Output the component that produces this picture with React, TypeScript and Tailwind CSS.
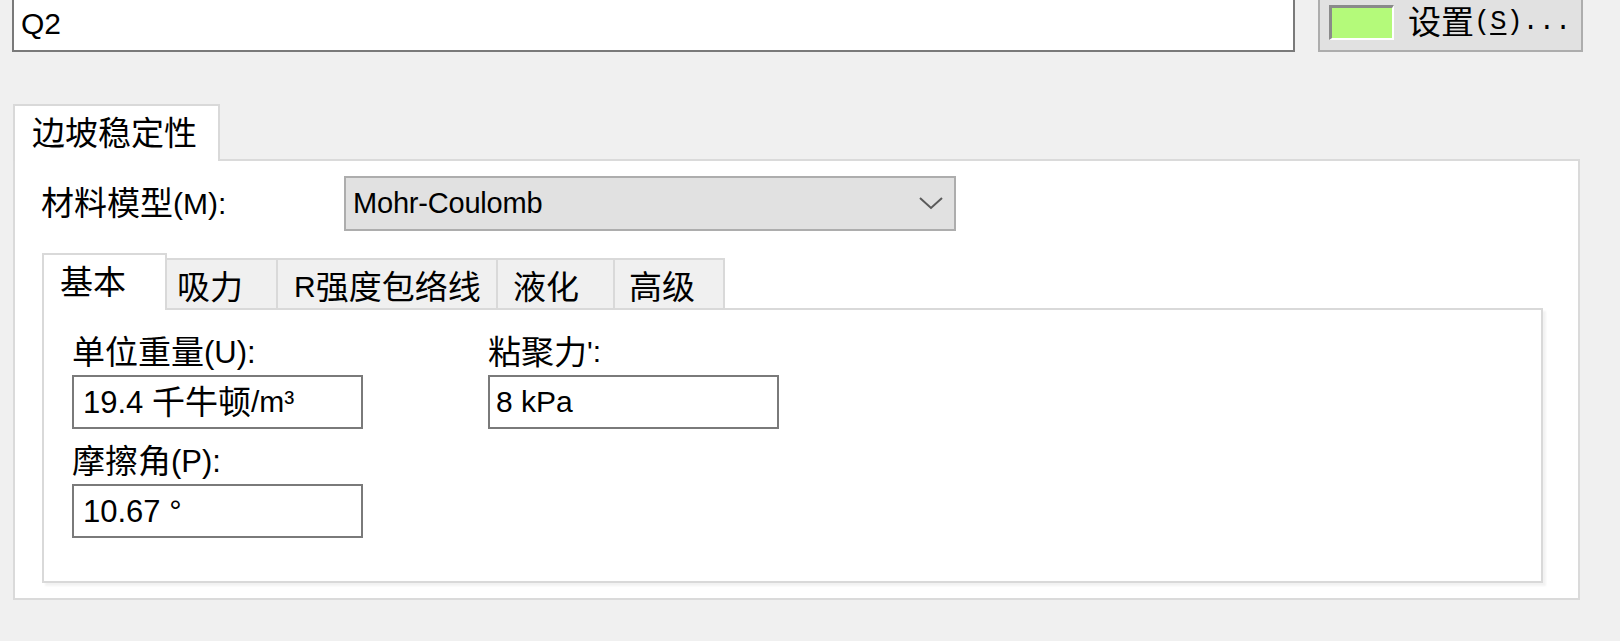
import React from 'react';

// Latin runs are set a bit smaller than the CJK ones, as in the original dialog
function L({ children }: { children: React.ReactNode }) {
  return <span className="text-[30px]">{children}</span>;
}

function Field({ label, value, pad }: { label: React.ReactNode; value: React.ReactNode; pad: string }) {
  return (
    <div className="flex flex-col">
      <div className="h-[36px] flex items-center">{label}</div>
      <div className={`mt-[5px] w-[291px] h-[54px] bg-white border-2 border-[#7a7a7a] flex items-center ${pad}`}>
        {value}
      </div>
    </div>
  );
}

export default function App() {
  return (
    <div className="w-[1620px] h-[641px] overflow-hidden bg-[#f0f0f0] text-black text-[33px] leading-none font-['Liberation_Sans','Noto_Sans_CJK_SC',sans-serif]">
      {/* Name + colour row */}
      <div className="flex items-end -mt-[10px] pl-[12px]">
        <div className="w-[1283px] h-[61px] bg-white border-2 border-[#7a7a7a] flex items-center pt-[5px] pl-[7px]">
          <L>Q2</L>
        </div>
        <button className="ml-[23px] w-[265px] h-[62px] bg-[#e1e1e1] border-2 border-[#adadad] flex items-center pt-[3px] pl-[9px]">
          <span className="w-[65px] h-[35px] bg-[#b4fa7a] border-t-[3px] border-l-[3px] border-t-[#8a8a8a] border-l-[#8a8a8a] border-b-2 border-r-2 border-b-white border-r-white" />
          <span className="ml-[14px] flex items-center">
            设置
            <span className="font-['Liberation_Mono',monospace] text-[27px]">
              (<span className="underline underline-offset-4">S</span>)...
            </span>
          </span>
        </button>
      </div>

      {/* Outer tab */}
      <div className="mt-[52px] ml-[13px] w-[207px] h-[57px] -mb-[2px] relative z-10 bg-white border-2 border-b-0 border-[#d9d9d9] flex items-center pl-[17px]">
        边坡稳定性
      </div>

      <div className="ml-[13px] w-[1567px] h-[441px] bg-white border-2 border-[#dadada]">
        {/* Material model */}
        <div className="mt-[15px] ml-[26px] flex items-center h-[55px]">
          <div className="w-[303px] flex items-center">
            材料模型<L>(M):</L>
          </div>
          <div className="w-[612px] h-[55px] bg-[#e1e1e1] border-2 border-[#adadad] flex items-center justify-between pl-[7px] pr-[11px]">
            <span className="text-[29px] tracking-[-0.2px]">Mohr-Coulomb</span>
            <svg width="24" height="13" viewBox="0 0 24 13">
              <polyline points="1,1 12,11 23,1" fill="none" stroke="#5a5a5a" strokeWidth="2" />
            </svg>
          </div>
        </div>

        {/* Inner tabs */}
        <div className="mt-[22px] ml-[27px] flex items-end">
          <div className="w-[125px] h-[57px] -mb-[2px] relative z-10 bg-white border-2 border-b-0 border-[#d9d9d9] flex items-center pl-[16px]">
            基本
          </div>
          <div className="w-[111px] h-[50px] bg-[#f0f0f0] border-t-2 border-r-2 border-[#d9d9d9] flex items-center pt-[6px] pl-[10px]">
            吸力
          </div>
          <div className="w-[220px] h-[50px] bg-[#f0f0f0] border-t-2 border-r-2 border-[#d9d9d9] flex items-center pt-[6px] pl-[16px]">
            <L>R</L>强度包络线
          </div>
          <div className="w-[117px] h-[50px] bg-[#f0f0f0] border-t-2 border-r-2 border-[#d9d9d9] flex items-center pt-[6px] pl-[15px]">
            液化
          </div>
          <div className="w-[110px] h-[50px] bg-[#f0f0f0] border-t-2 border-r-2 border-[#d9d9d9] flex items-center pt-[6px] pl-[14px]">
            高级
          </div>
        </div>

        <div className="ml-[27px] w-[1501px] h-[275px] bg-white border-2 border-[#d9d9d9] shadow-[3px_3px_2px_rgba(0,0,0,0.05)] pt-[24px] pl-[28px] flex">
          <div className="flex flex-col">
            <Field
              label={<>单位重量<span className="text-[31px]">(U):</span></>}
              value={<><span className="text-[31px]">19.4&nbsp;</span>千牛顿<L>/m³</L></>}
              pad="pl-[9px]"
            />
            <div className="mt-[14px]">
              <Field
                label={<>摩擦角<span className="text-[31px]">(P):</span></>}
                value={<span className="text-[31px]">10.67 °</span>}
                pad="pl-[9px]"
              />
            </div>
          </div>
          <div className="ml-[125px]">
            <Field label={<>粘聚力<L>':</L></>} value={<L>8 kPa</L>} pad="pl-[6px]" />
          </div>
        </div>
      </div>
    </div>
  );
}
